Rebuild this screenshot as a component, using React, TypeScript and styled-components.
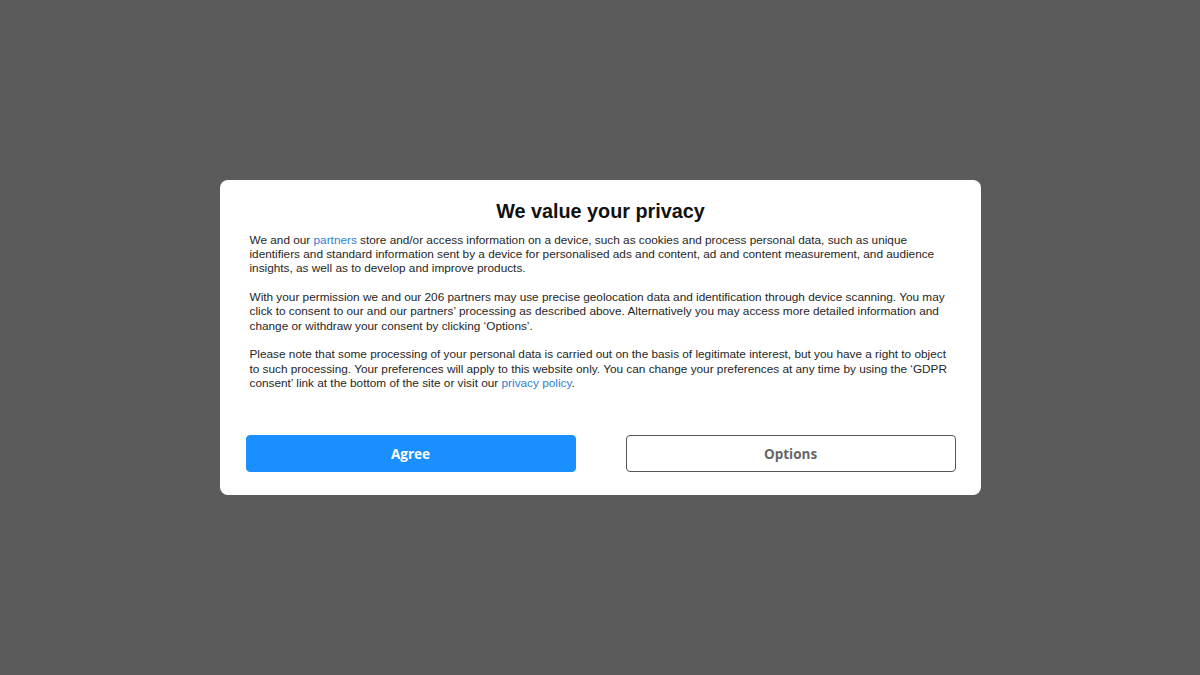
import styled, { createGlobalStyle } from "styled-components";

const GlobalStyle = createGlobalStyle`
  html, body {
    margin: 0;
    padding: 0;
    height: 100%;
  }
  body {
    background: #5b5b5b;
    font-family: "Liberation Sans", Arial, sans-serif;
  }
  #root {
    height: 100%;
  }
`;

const Overlay = styled.div`
  height: 100%;
  display: flex;
  align-items: center;
  justify-content: center;
`;

const Modal = styled.div`
  width: 761px;
  box-sizing: border-box;
  background: #ffffff;
  border-radius: 8px;
  padding: 19px 25px 23px 26px;
`;

const Title = styled.h2`
  margin: 0 0 10px;
  text-align: center;
  font-size: 19.8px;
  line-height: 24px;
  font-weight: bold;
  color: #111;
`;

const Body = styled.div`
  padding: 0 4px;
  font-size: 11.8px;
  line-height: 14.4px;
  color: #262626;
`;

const Paragraph = styled.p`
  margin: 0 0 14px;
  &:last-child {
    margin-bottom: 0;
  }
`;

const Link = styled.a`
  color: #2f7ed4;
  text-decoration: none;
`;

const Actions = styled.div`
  display: flex;
  gap: 50px;
  margin-top: 45px;
`;

const Button = styled.button<{ $primary?: boolean }>`
  flex: 1;
  height: 37px;
  border-radius: 4px;
  font-family: "Open Sans", "Liberation Sans", sans-serif;
  font-size: 13.5px;
  font-weight: 700;
  cursor: pointer;
  background: ${(p) => (p.$primary ? "#1a8fff" : "#ffffff")};
  color: ${(p) => (p.$primary ? "#ffffff" : "#666666")};
  border: 1px solid ${(p) => (p.$primary ? "#1a8fff" : "#555555")};
`;

export default function App() {
  return (
    <>
      <GlobalStyle />
      <Overlay>
        <Modal>
          <Title>We value your privacy</Title>
          <Body>
            <Paragraph>
              We and our <Link href="#">partners</Link> store and/or access information on a device, such as cookies
              and process personal data, such as unique identifiers and standard information sent by a device for
              personalised ads and content, ad and content measurement, and audience insights, as well as to develop
              and improve products.
            </Paragraph>
            <Paragraph>
              With your permission we and our 206 partners may use precise geolocation data and identification through
              device scanning. You may click to consent to our and our partners’ processing as described above.
              Alternatively you may access more detailed information and change or withdraw your consent by clicking
              ‘Options’.
            </Paragraph>
            <Paragraph>
              Please note that some processing of your personal data is carried out on the basis of legitimate
              interest, but you have a right to object to such processing. Your preferences will apply to this website
              only. You can change your preferences at any time by using the ‘GDPR consent’ link at the bottom of the
              site or visit our <Link href="#">privacy policy</Link>.
            </Paragraph>
          </Body>
          <Actions>
            <Button $primary>Agree</Button>
            <Button>Options</Button>
          </Actions>
        </Modal>
      </Overlay>
    </>
  );
}
